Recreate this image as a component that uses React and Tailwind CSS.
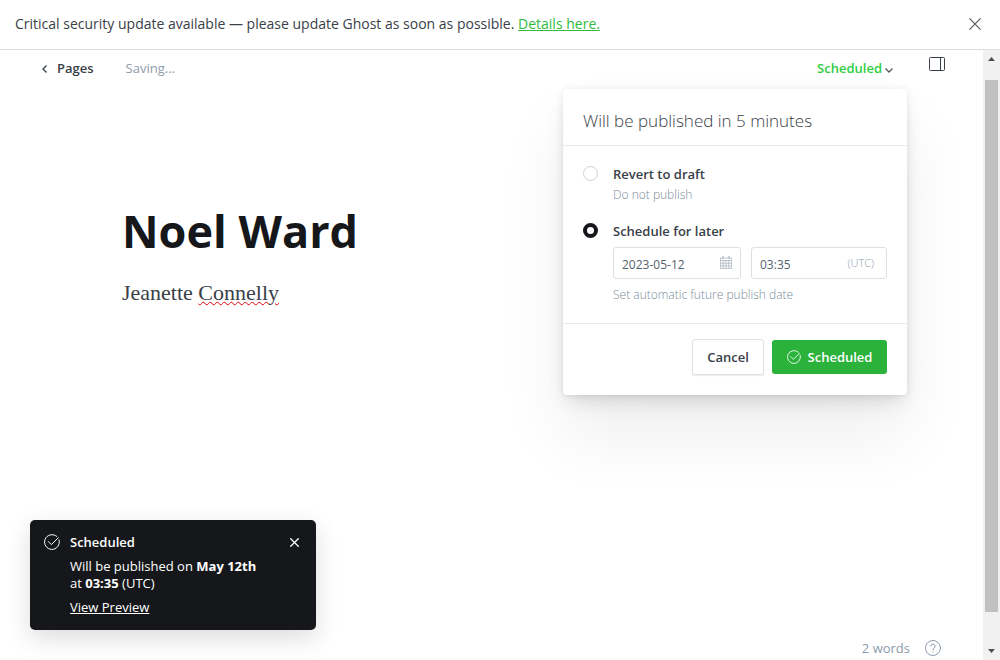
import React, { useState } from 'react';

function CheckCircle({ className }) {
  return (
    <svg viewBox="0 0 16 16" className={className} fill="none" stroke="currentColor" strokeLinecap="round" strokeLinejoin="round" aria-hidden="true">
      <path d="M15.1 6A7.4 7.4 0 1 1 12.8 2.4" />
      <path d="M4.4 7.6 7.3 10.6 14.3 3.8" />
    </svg>
  );
}

function Cross({ className, strokeWidth = 1 }) {
  return (
    <svg viewBox="0 0 12 12" className={className} fill="none" stroke="currentColor" strokeWidth={strokeWidth} aria-hidden="true">
      <path d="M.4.4 11.6 11.6M11.6.4.4 11.6" />
    </svg>
  );
}

function CalendarIcon() {
  return (
    <svg viewBox="0 0 12 13" className="mb-px h-[13px] w-3 shrink-0 text-[#aeb7c1]" fill="none" stroke="currentColor" strokeWidth="0.8" aria-hidden="true">
      <path d="M.5 2h11v10.5H.5zM.5 4.5h11M.5 7.2h11M.5 9.9h11M3.2 4v8.5M6 4v8.5M8.8 4v8.5" />
      <path d="M3 0v3M9 0v3" strokeWidth="1.2" />
    </svg>
  );
}

function Banner() {
  return (
    <div className="flex h-[50px] shrink-0 items-center justify-between border-b border-[#dddddd] pr-[19px] pb-px pl-[15px]">
      <p className="text-sm text-[#394047]">
        Critical security update available — please update Ghost as soon as possible.{' '}
        <a href="#details" className="text-[#2dbc3e] underline">Details here.</a>
      </p>
      <button type="button" aria-label="Dismiss" className="text-[#54595f]">
        <Cross className="size-3" strokeWidth={1.2} />
      </button>
    </div>
  );
}

function Radio({ id, checked, onChange }) {
  return (
    <input
      id={id}
      type="radio"
      name="publish"
      checked={checked}
      onChange={onChange}
      className="mt-[2px] size-[15px] shrink-0 appearance-none rounded-full border border-[#c9d2da] bg-white checked:border-4 checked:border-[#15171a]"
    />
  );
}

function PublishMenu() {
  const [mode, setMode] = useState('schedule');
  return (
    <section className="absolute -right-3.5 top-[30px] z-10 w-[344px] rounded-[4px] bg-white shadow-[0_0_7px_rgba(0,0,0,0.08),0_2px_2px_rgba(0,0,0,0.02),0_10px_18px_-4px_rgba(0,0,0,0.12),0_40px_70px_rgba(0,0,0,0.07)]">
      <h2 className="flex h-[57px] items-center border-b border-[#e9ebed] px-5 pt-[6px] text-[17px] font-light text-[#394047]">
        Will be published in 5 minutes
      </h2>
      <div className="px-5 pt-[18px] text-[13px]">
        <div className="flex h-[57px] gap-[15px]">
          <Radio id="revert" checked={mode === 'revert'} onChange={() => setMode('revert')} />
          <div>
            <label htmlFor="revert" className="block leading-5 font-semibold text-[#394047]">Revert to draft</label>
            <p className="text-xs leading-[22px] font-light text-[#7c8b9a]">Do not publish</p>
          </div>
        </div>
        <div className="flex gap-[15px]">
          <Radio id="schedule" checked={mode === 'schedule'} onChange={() => setMode('schedule')} />
          <div className="min-w-0 flex-1">
            <label htmlFor="schedule" className="block leading-5 font-semibold text-[#394047]">Schedule for later</label>
            <div className="mt-[6px] flex gap-2.5">
              <div className="flex h-8 w-32 items-center rounded-[3px] border border-[#dddfe2] px-2">
                <input aria-label="Publish date" defaultValue="2023-05-12" className="w-full min-w-0 bg-transparent pt-1 text-xs text-[#54616e] outline-none" />
                <CalendarIcon />
              </div>
              <div className="flex h-8 flex-1 items-center rounded-[3px] border border-[#dddfe2] pr-3 pl-2">
                <input aria-label="Publish time" defaultValue="03:35" className="w-full min-w-0 bg-transparent pt-1 text-xs text-[#54616e] outline-none" />
                <span className="text-[11px] font-light text-[#8e9cac]">(UTC)</span>
              </div>
            </div>
            <p className="mt-[6px] text-xs leading-5 font-light text-[#7c8b9a]">Set automatic future publish date</p>
          </div>
        </div>
      </div>
      <footer className="mt-[18px] flex items-center justify-end gap-2 border-t border-[#e9ebed] px-5 pt-[15px] pb-5 text-[13px]">
        <button type="button" className="h-9 w-[72px] rounded-[3px] border border-[#dde1e5] bg-white font-semibold text-[#394047] shadow-[0_1px_1px_rgba(0,0,0,0.08)]">Cancel</button>
        <button type="button" className="flex h-[34px] w-[115px] items-center justify-center gap-[7px] rounded-[3px] bg-[#2ab23a] font-semibold text-white">
          <CheckCircle className="size-3.5" />
          Scheduled
        </button>
      </footer>
    </section>
  );
}

function Header() {
  return (
    <header className="flex h-[38px] shrink-0 items-center pr-[38px] pl-[42px] text-[13px]">
      <a href="#pages" className="flex items-center gap-2.5 font-semibold text-[#394047]">
        <svg viewBox="0 0 5 8" className="h-2 w-[5px]" fill="none" stroke="currentColor" strokeWidth="1.3" aria-hidden="true">
          <path d="M4.5.5 1 4l3.5 3.5" />
        </svg>
        Pages
      </a>
      <span className="ml-8 text-[#8e9cac]">Saving...</span>
      <div className="relative ml-auto">
        <button type="button" className="flex items-center gap-[3px] font-semibold text-[#30cf43]">
          Scheduled
          <svg viewBox="0 0 8 5" className="mt-[3px] h-[5px] w-2 text-[#54595f]" fill="none" stroke="currentColor" strokeWidth="1.3" aria-hidden="true">
            <path d="M.5.5 4 4 7.5.5" />
          </svg>
        </button>
        <PublishMenu />
      </div>
      <button type="button" aria-label="Settings" className="mb-2.5 ml-9 text-[#394047]">
        <svg viewBox="0 0 16 14" className="h-3.5 w-4" fill="none" stroke="currentColor" aria-hidden="true">
          <rect x=".5" y=".5" width="15" height="13" rx="1" />
          <path d="M11.5.5v13" />
        </svg>
      </button>
    </header>
  );
}

function Toast() {
  return (
    <aside className="absolute bottom-[30px] left-[30px] flex w-[286px] items-start gap-2.5 rounded-[5px] bg-[#15171a] px-3.5 pt-3 pb-3.5 text-[13px] text-white shadow-[0_8px_24px_rgba(0,0,0,0.14)]">
      <CheckCircle className="mt-[2px] size-4 shrink-0" />
      <div className="flex-1">
        <h3 className="leading-5 font-semibold">Scheduled</h3>
        <p className="mt-[6px] leading-[17px]">
          Will be published on <strong className="font-bold">May 12th</strong>
          <br />
          at <strong className="font-bold">03:35</strong> (UTC)
        </p>
        <a href="#preview" className="mt-[6px] block leading-[18px] underline">View Preview</a>
      </div>
      <button type="button" aria-label="Close" className="mt-1.5 mr-[3px]">
        <Cross className="size-[9px]" strokeWidth={1.7} />
      </button>
    </aside>
  );
}

function Scrollbar() {
  return (
    <div className="flex w-[17px] shrink-0 flex-col items-center justify-between bg-[#f1f1f1] py-[7px] text-[#505050]" aria-hidden="true">
      <svg viewBox="0 0 7 4" className="h-1 w-[7px]" fill="currentColor"><path d="M0 4 3.5 0 7 4z" /></svg>
      <div className="mt-[19px] mb-[37px] w-[13px] flex-1 bg-[#c1c1c1]" />
      <svg viewBox="0 0 7 4" className="h-1 w-[7px]" fill="currentColor"><path d="M0 0 3.5 4 7 0z" /></svg>
    </div>
  );
}

export default function App() {
  return (
    <div className="flex h-screen flex-col overflow-hidden bg-white font-['Open_Sans',sans-serif]">
      <Banner />
      <div className="flex min-h-0 flex-1">
        <main className="relative flex min-w-0 flex-1 flex-col overflow-hidden">
          <Header />
          <article className="flex-1 px-[122px] pt-[113px]">
            <h1 className="text-[45px] leading-[60px] font-bold text-[#15171a]">Noel Ward</h1>
            <p className="mt-4 font-['Liberation_Serif',serif] text-[22px] leading-8 text-[#394047]">
              Jeanette <span className="underline decoration-red-600 decoration-wavy decoration-1">Connelly</span>
            </p>
          </article>
          <div className="flex items-center justify-end gap-[15px] pr-[42px] pb-[2px] text-[13px] text-[#8e9cac]">
            2 words
            <button type="button" aria-label="Help">
              <svg viewBox="0 0 16 16" className="size-4" fill="none" stroke="currentColor" strokeLinecap="round" aria-hidden="true">
                <circle cx="8" cy="8" r="7.5" />
                <path d="M5.9 6.2a2.1 2.1 0 1 1 3 1.9Q8 8.5 8 9.8M8 11.8v.1" />
              </svg>
            </button>
          </div>
          <Toast />
        </main>
        <Scrollbar />
      </div>
    </div>
  );
}
